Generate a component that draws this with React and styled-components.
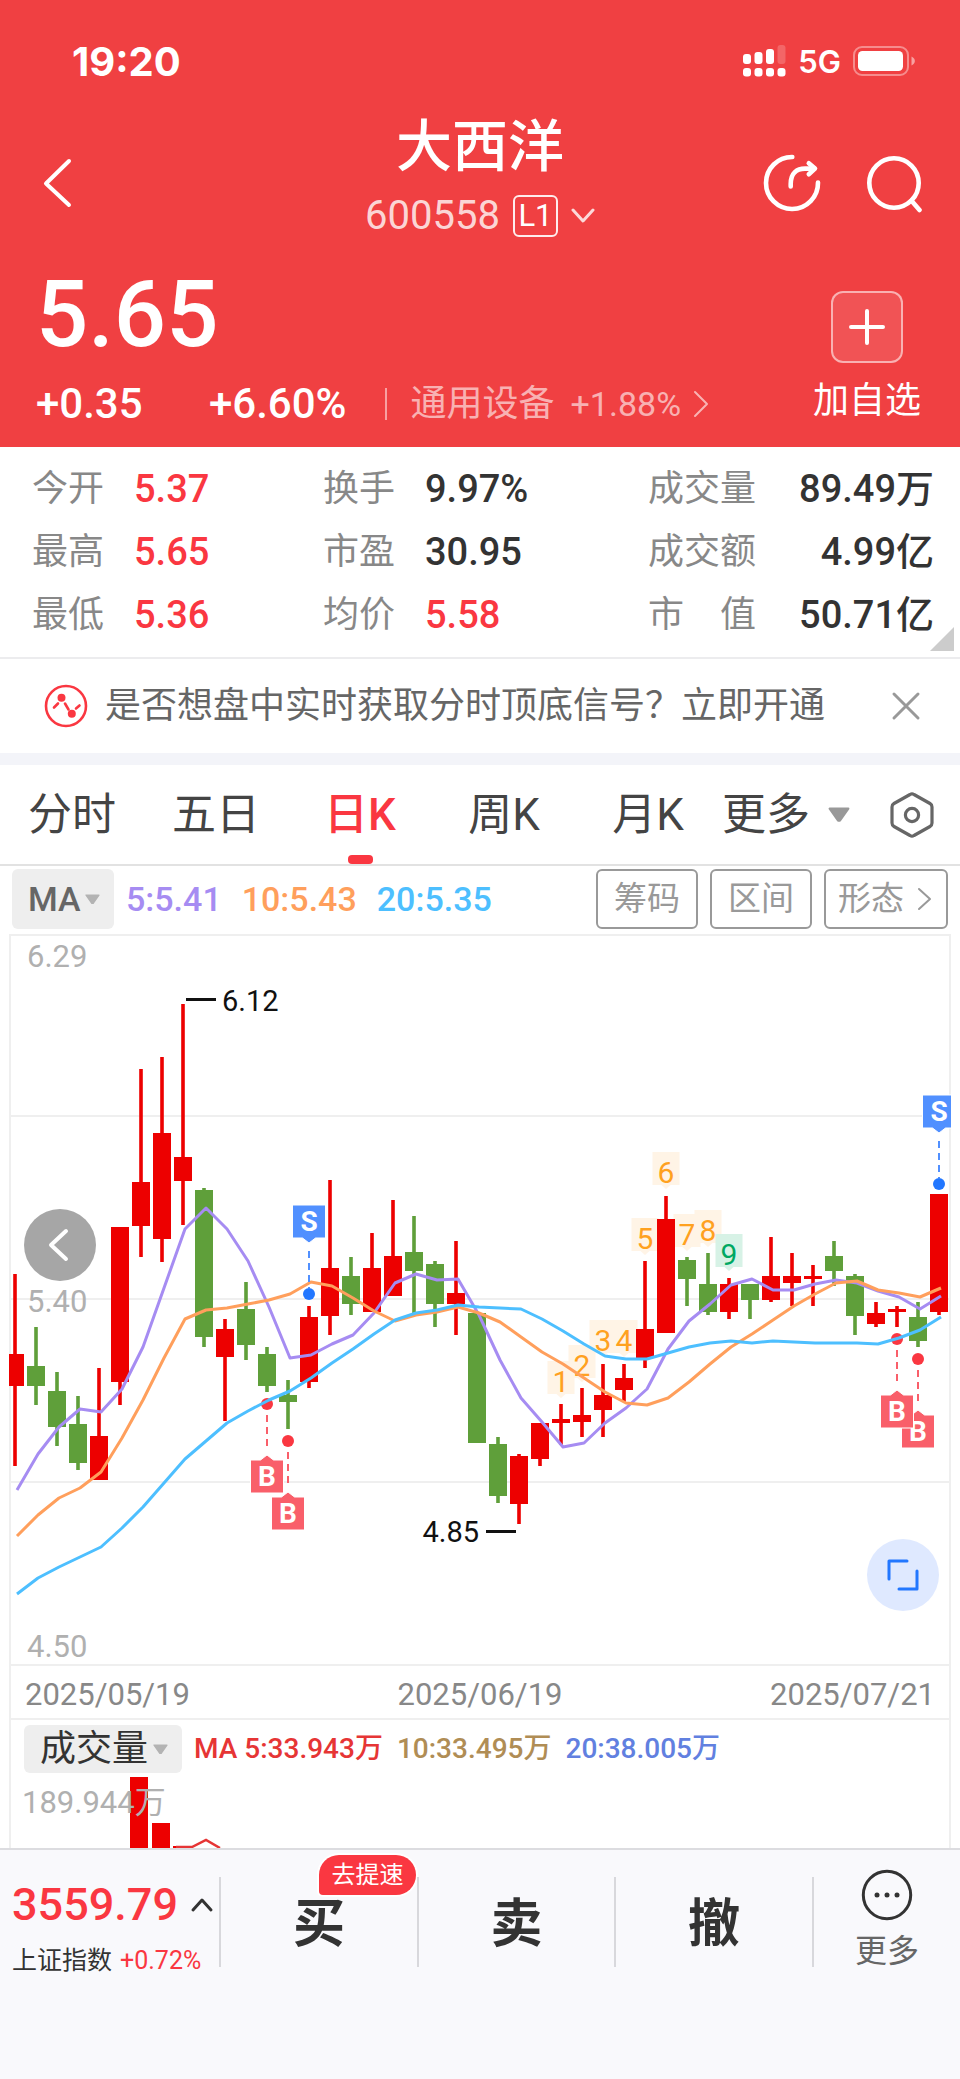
import React, {useState} from 'react';
import styled, {createGlobalStyle} from 'styled-components';

const GlobalStyle = createGlobalStyle`
  * {
    box-sizing: border-box;
  }
  body {
    margin: 0;
    background-color: #fff;
    font-family: Roboto, 'Noto Sans CJK SC', sans-serif;
    color: #333;
  }
  button,
  select {
    margin: 0;
    padding: 0;
    border: 0;
    background: none;
    color: inherit;
    font: inherit;
    cursor: pointer;
  }
  a {
    color: inherit;
    text-decoration: none;
  }
  dl,
  dt,
  dd,
  h1,
  p {
    margin: 0;
    font-weight: inherit;
  }
  svg {
    display: block;
    flex: none;
  }
`;

const RED = '#fa3741';
const UP = '#ed0000';
const DOWN = '#5f9f3a';

const Page = styled.div`
  min-height: 100vh;
  display: flex;
  flex-direction: column;
`;

const Header = styled.header`
  background-color: #f04042;
  color: #fff;
`;

const StatusBar = styled.div`
  height: 108px;
  padding: 14px 44px 0 72px;
  display: flex;
  align-items: center;
  justify-content: space-between;
  font-family: Inter, sans-serif;
`;

const Clock = styled.span`
  font-size: 40px;
  font-weight: 700;
`;

const StatusIcons = styled.div`
  display: flex;
  align-items: center;
  gap: 12px;
  font-size: 31px;
  font-weight: 600;
`;

const Nav = styled.nav`
  min-height: 150px;
  padding: 0 36px;
  display: grid;
  grid-template-columns: 1fr auto 1fr;
  align-items: center;
`;

const NavActions = styled.div`
  display: flex;
  justify-content: ${props => (props.$end ? 'flex-end' : 'flex-start')};
  gap: 42px;
`;

const NavTitle = styled.div`
  align-self: start;
  display: flex;
  flex-direction: column;
  align-items: center;
`;

const StockName = styled.h1`
  font-size: 56px;
  font-weight: 500;
  line-height: 78px;
`;

const StockCode = styled.button`
  display: flex;
  align-items: center;
  gap: 13px;
  margin-top: 8px;
  font-size: 40px;
  line-height: 44px;
  color: rgba(255, 255, 255, 0.8);
`;

const LevelTag = styled.span`
  width: 45px;
  border: 2px solid rgba(255, 255, 255, 0.9);
  border-radius: 6px;
  font-size: 31px;
  line-height: 38px;
  color: #fff;
`;

const Quote = styled.section`
  padding: 0 39px 18px 36px;
  display: flex;
  justify-content: space-between;
`;

const Price = styled.p`
  padding-top: 7px;
  font-size: 92px;
  font-weight: 500;
  line-height: 100px;
`;

const ChangeRow = styled.div`
  margin-top: 14px;
  display: flex;
  align-items: center;
  font-size: 42px;
  font-weight: 500;
  line-height: 50px;
`;

const Change = styled.span`
  min-width: 173px;
`;

const Sector = styled.a`
  margin-left: 38px;
  padding-left: 24px;
  display: flex;
  align-items: center;
  font-size: 36px;
  font-weight: 400;
  line-height: 32px;
  color: rgba(255, 255, 255, 0.6);
  border-left: 2px solid rgba(255, 255, 255, 0.5);
`;

const SectorChange = styled.span`
  margin: 0 12px 0 16px;
  font-size: 34px;
`;

const AddWatch = styled.button`
  padding-top: 33px;
  display: flex;
  flex-direction: column;
  align-items: center;
  gap: 16px;
  font-size: 36px;
  line-height: 44px;
`;

const PlusBox = styled.span`
  width: 72px;
  height: 72px;
  display: flex;
  align-items: center;
  justify-content: center;
  border: 2px solid rgba(255, 255, 255, 0.55);
  border-radius: 12px;
  background-color: rgba(255, 255, 255, 0.1);
`;

const Stats = styled.dl`
  position: relative;
  padding: 10px 26px 11px 32px;
  display: grid;
  grid-template-columns: 291fr 325fr 286fr;
  grid-auto-rows: 63px;
  border-bottom: 2px solid #ececee;
`;

const Stat = styled.div`
  display: flex;
  align-items: center;
  gap: 30px;
  justify-content: ${props => (props.$spread ? 'space-between' : 'flex-start')};
  line-height: 44px;

  dt {
    font-size: 36px;
    color: #888;
  }
  dd {
    font-size: 38px;
    font-weight: 500;
    white-space: nowrap;
    color: ${props => (props.$up ? RED : '#333')};
  }
`;

const Corner = styled.span`
  position: absolute;
  right: 6px;
  bottom: 6px;
  border-left: 24px solid transparent;
  border-bottom: 24px solid #ccc;
`;

const Notice = styled.div`
  height: 106px;
  padding: 0 38px 0 44px;
  display: flex;
  align-items: center;
  justify-content: space-between;
  border-bottom: 12px solid #f3f4f9;
  font-size: 36px;
  line-height: 44px;
  color: #666;
`;

const NoticeLink = styled.a`
  display: flex;
  align-items: center;
  gap: 17px;
`;

const Tabs = styled.div`
  height: 101px;
  display: grid;
  grid-template-columns: repeat(6, 144fr) 96fr;
  border-bottom: 2px solid #e2e2e2;
`;

const Tab = styled.button`
  position: relative;
  display: flex;
  align-items: center;
  justify-content: center;
  gap: 18px;
  font-size: 44px;
  line-height: 52px;
  color: ${props => (props.$active ? RED : '#444')};
  font-weight: ${props => (props.$active ? 500 : 400)};

  &::after {
    content: '';
    display: ${props => (props.$active ? 'block' : 'none')};
    position: absolute;
    bottom: 0;
    width: 25px;
    height: 9px;
    border-radius: 4px;
    background-color: ${RED};
  }
`;

const MoreTab = styled(Tab)`
  padding-right: 12px;
`;

const Toolbar = styled.div`
  padding: 3px 12px 5px;
  display: flex;
  align-items: center;
  gap: 12px;
`;

const Picker = styled.label`
  height: ${props => (props.$small ? 48 : 60)}px;
  padding: 0 14px 0 16px;
  display: flex;
  align-items: center;
  gap: 4px;
  border-radius: 6px;
  background-color: #eee;
  font-size: ${props => (props.$small ? 36 : 34)}px;
  font-weight: ${props => (props.$small ? 400 : 500)};
  color: ${props => (props.$small ? '#333' : '#666')};

  select {
    appearance: none;
    line-height: 44px;
    outline: none;
  }
`;

const MaList = styled.div`
  flex: 1;
  display: flex;
  gap: ${props => (props.$small ? 14 : 20)}px;
  font-size: ${props => (props.$small ? 28 : 34)}px;
  font-weight: 500;
  line-height: 44px;
  white-space: nowrap;
`;

const MaValue = styled.span`
  color: ${props => props.$color};
`;

const ToolButton = styled.button`
  height: 60px;
  padding: 0 ${props => (props.$arrow ? 12 : 16)}px;
  display: flex;
  align-items: center;
  gap: 12px;
  border: 2px solid #999;
  border-radius: 6px;
  font-size: 33px;
  line-height: 44px;
  color: #999;
`;

const ChartArea = styled.div`
  position: relative;

  > svg {
    width: 100%;
    height: auto;
    overflow: visible;
  }
`;

const RoundButton = styled.button`
  position: absolute;
  width: 72px;
  height: 72px;
  display: flex;
  align-items: center;
  justify-content: center;
  border-radius: 50%;
`;

const ScrollBack = styled(RoundButton)`
  left: 24px;
  top: 275px;
  background-color: #a6a6a6;
`;

const Expand = styled(RoundButton)`
  right: 21px;
  bottom: 55px;
  background-color: #dfe9ff;
`;

const Dates = styled.div`
  height: 54px;
  margin: 0 9px;
  padding: 4px 14px 0;
  display: flex;
  align-items: center;
  justify-content: space-between;
  border: 2px solid #efefef;
  border-top: 0;
  font-size: 31px;
  color: #888;
`;

const Volume = styled.section`
  margin: 0 9px;
  border: solid #efefef;
  border-width: 0 2px;

  > svg {
    width: 100%;
    height: auto;
  }
`;

const VolumeHead = styled.div`
  padding: 5px 13px 4px;
  display: flex;
  align-items: center;
  gap: 12px;
`;

const Footer = styled.footer`
  flex: 1;
  padding-top: 27px;
  border-top: 2px solid #dcdce0;
  background-color: #f9f9fc;
`;

const FooterBar = styled.div`
  display: grid;
  grid-template-rows: 90px;
  grid-template-columns: 219fr 198fr 197fr 198fr 148fr;

  > * + * {
    border-left: 2px solid #d8d8dc;
  }
`;

const IndexQuote = styled.a`
  padding-left: 12px;
  display: flex;
  flex-direction: column;
  white-space: nowrap;
  color: ${RED};
`;

const IndexValue = styled.span`
  display: flex;
  align-items: center;
  gap: 12px;
  font-size: 45px;
  font-weight: 500;
  line-height: 56px;
`;

const IndexName = styled.span`
  font-size: 25px;
  line-height: 56px;

  em {
    margin-right: 8px;
    font-style: normal;
    color: #333;
  }
`;

const Trade = styled.button`
  position: relative;
  padding-top: 6px;
  font-size: 52px;
  font-weight: 700;
  line-height: 84px;
`;

const Badge = styled.span`
  position: absolute;
  top: -22px;
  right: 1px;
  width: 97px;
  border-radius: 20px 20px 20px 4px;
  background-color: ${RED};
  box-shadow: 0 0 0 2px #fff;
  color: #fff;
  font-size: 24px;
  font-weight: 400;
  line-height: 40px;
`;

const More = styled.button`
  display: flex;
  flex-direction: column;
  align-items: center;
  justify-content: space-between;
  font-size: 32px;
  line-height: 32px;
  color: #666;

  svg {
    margin-top: -8px;
  }
`;

const STATS = [
  {label: '今开', value: '5.37', up: true},
  {label: '换手', value: '9.97%'},
  {label: '成交量', value: '89.49万', spread: true},
  {label: '最高', value: '5.65', up: true},
  {label: '市盈', value: '30.95'},
  {label: '成交额', value: '4.99亿', spread: true},
  {label: '最低', value: '5.36', up: true},
  {label: '均价', value: '5.58', up: true},
  {label: '市　值', value: '50.71亿', spread: true},
];

const TABS = ['分时', '五日', '日K', '周K', '月K'];

// [high, body top, body bottom, low, rising], in chart units from the top
const CANDLES = [
  [340, 420, 452, 532, 1],
  [393, 432, 452, 471, 0],
  [438, 457, 493, 512, 0],
  [462, 490, 529, 536, 0],
  [434, 502, 546, 546, 1],
  [293, 293, 448, 471, 1],
  [135, 248, 292, 323, 1],
  [123, 199, 305, 328, 1],
  [70, 223, 247, 291, 1],
  [254, 256, 403, 413, 0],
  [385, 395, 423, 487, 1],
  [348, 375, 411, 426, 0],
  [413, 420, 452, 458, 0],
  [446, 461, 468, 495, 0],
  [372, 383, 448, 454, 1],
  [246, 334, 382, 401, 1],
  [323, 342, 370, 381, 0],
  [299, 334, 378, 378, 1],
  [266, 322, 362, 362, 1],
  [282, 318, 337, 379, 0],
  [327, 330, 370, 393, 0],
  [307, 359, 370, 401, 1],
  [379, 379, 509, 509, 0],
  [503, 510, 562, 569, 0],
  [520, 522, 570, 590, 1],
  [489, 489, 525, 532, 1],
  [470, 485, 489, 511, 1],
  [454, 481, 488, 503, 1],
  [430, 461, 476, 503, 1],
  [430, 444, 456, 468, 1],
  [327, 395, 424, 434, 1],
  [262, 285, 399, 399, 1],
  [323, 326, 345, 372, 0],
  [319, 350, 378, 381, 0],
  [344, 350, 378, 385, 1],
  [350, 350, 366, 385, 0],
  [303, 342, 366, 368, 1],
  [319, 342, 349, 372, 1],
  [331, 342, 345, 372, 1],
  [307, 322, 337, 352, 0],
  [340, 342, 382, 401, 0],
  [368, 379, 390, 393, 1],
  [372, 375, 378, 393, 1],
  [368, 383, 407, 413, 0],
  [260, 260, 378, 381, 1],
];

const MA_LINES = [
  {
    color: '#a68cf2',
    points: [
      556, 520, 493, 475, 478, 455, 413, 354, 295, 274, 295, 327, 373, 424, 421,
      410, 401, 379, 349, 340, 346, 345, 381, 426, 464, 488, 513, 509, 489, 474,
      455, 415, 387, 370, 351, 345, 356, 356, 350, 346, 349, 357, 363, 375, 362,
    ],
  },
  {
    color: '#ff9f5c',
    points: [
      602, 581, 564, 554, 538, 504, 466, 424, 385, 376, 374, 370, 366, 360, 348,
      352, 364, 377, 387, 381, 378, 373, 379, 388, 403, 418, 430, 444, 458, 469,
      471, 464, 448, 430, 413, 400, 386, 372, 360, 349, 347, 356, 359, 363, 354,
    ],
  },
  {
    color: '#4dbfff',
    points: [
      660, 644, 633, 623, 613, 594, 573, 549, 525, 507, 489, 477, 466, 457, 444,
      429, 415, 400, 386, 379, 376, 371, 373, 374, 375, 385, 397, 410, 422, 425,
      425, 419, 413, 409, 407, 409, 407, 408, 409, 409, 409, 410, 404, 396, 383,
    ],
  },
];

// candle index and top of the numbered tag
const COUNTS = [
  [26, 427],
  [27, 411],
  [28, 386],
  [29, 386],
  [30, 284],
  [31, 218],
  [32, 280],
  [33, 276],
  [34, 300],
];

// candle index and height of the dot
const SIGNALS = [
  {type: 'S', index: 14, y: 360},
  {type: 'S', index: 44, y: 250},
  {type: 'B', index: 12, y: 470},
  {type: 'B', index: 13, y: 507},
  {type: 'B', index: 43, y: 425},
  {type: 'B', index: 42, y: 405},
];

const xOf = index => 15 + index * 21;

const Chevron = ({d, width, height, stroke = 2, color = 'currentColor'}) => (
  <svg width={width} height={height} viewBox={`0 0 ${width} ${height}`}>
    <path
      d={d}
      fill="none"
      stroke={color}
      strokeWidth={stroke}
      strokeLinecap="round"
      strokeLinejoin="round"
    />
  </svg>
);

const Triangle = ({size, color}) => (
  <svg width={size} height={size * 0.7} viewBox="0 0 20 14">
    <path
      d="M1.500 1.500H18.500L10.800 12.500H9.200Z"
      fill={color}
      stroke={color}
      strokeWidth="2"
      strokeLinejoin="round"
    />
  </svg>
);

const SignalIcon = () => (
  <svg width="43" height="32" viewBox="0 0 43 32" fill="#fff">
    <rect x="0" y="9" width="8" height="10" rx="3" />
    <rect x="11.500" y="7" width="8" height="12" rx="3" />
    <rect x="23" y="4" width="8" height="15" rx="3" />
    <rect x="34.500" y="0" width="8" height="19" rx="3" opacity="0.2" />
    <rect x="0" y="23" width="8" height="8.500" rx="3" />
    <rect x="11.500" y="23" width="8" height="8.500" rx="3" />
    <rect x="23" y="23" width="8" height="8.500" rx="3" />
    <rect x="34.500" y="23" width="8" height="8.500" rx="3" />
  </svg>
);

const BatteryIcon = () => (
  <svg width="63" height="30" viewBox="0 0 63 30">
    <rect
      x="1"
      y="1"
      width="54"
      height="28"
      rx="8"
      fill="none"
      stroke="#fff"
      strokeWidth="2"
      opacity="0.4"
    />
    <rect x="5" y="5" width="45" height="20" rx="4.500" fill="#fff" />
    <path d="M58.500 10.500C63 12.500 63 17.500 58.500 19.500Z" fill="#fff" opacity="0.5" />
  </svg>
);

const ShareIcon = () => (
  <svg width="60" height="60" viewBox="0 0 60 60" fill="none">
    <g
      stroke="#fff"
      strokeWidth="4.600"
      strokeLinecap="round"
      strokeLinejoin="round">
      <path d="M30.300 4A26 26 0 1 0 56 29.500" />
      <path d="M28.700 33.500V31C28.700 20 35 15.600 43 15.600H52" />
      <path d="M46.800 10.200L53 15.600L46.800 21.300" />
    </g>
  </svg>
);

const SearchIcon = () => (
  <svg width="60" height="60" viewBox="0 0 60 60" fill="none">
    <g stroke="#fff" strokeWidth="4.600" strokeLinecap="round">
      <circle cx="30" cy="30" r="24.700" />
      <path d="M47.500 47.700L55.500 57" />
    </g>
  </svg>
);

const TrendIcon = () => (
  <svg width="44" height="44" viewBox="0 0 44 44" fill="none">
    <g stroke={RED} strokeWidth="2.600" strokeLinecap="round">
      <circle cx="22" cy="22" r="20" />
      <path d="M10 23.500L14 19.500M21 19.500L24.500 25.500M32 24.500L35.500 21.500" />
    </g>
    <circle cx="17.500" cy="13.700" r="4" fill={RED} />
    <circle cx="27.800" cy="29.800" r="4" fill={RED} />
  </svg>
);

const SettingsIcon = () => (
  <svg width="48" height="48" viewBox="0 0 48 48" fill="none">
    <g stroke="#666" strokeWidth="3.200" strokeLinejoin="round">
      <path d="M22 3.500Q24 2.300 26 3.500L42 12.500Q44 13.600 44 16V32Q44 34.400 42 35.500L26 44.500Q24 45.700 22 44.500L6 35.500Q4 34.400 4 32V16Q4 13.600 6 12.500Z" />
      <circle cx="24" cy="24" r="6.600" />
    </g>
  </svg>
);

const MoreIcon = () => (
  <svg width="52" height="52" viewBox="0 0 52 52">
    <circle cx="26" cy="26" r="23.700" fill="none" stroke="#333" strokeWidth="3" />
    <g fill="#333">
      <circle cx="16" cy="26" r="2.500" />
      <circle cx="26" cy="26" r="2.500" />
      <circle cx="36" cy="26" r="2.500" />
    </g>
  </svg>
);

const Candle = ({index, data: [high, top, bottom, low, rising]}) => {
  const x = xOf(index);
  const color = rising ? UP : DOWN;
  return (
    <g fill={color}>
      <rect x={x - 1.8} y={high} width="3.600" height={low - high} />
      <rect x={x - 9} y={top} width="18" height={bottom - top} />
    </g>
  );
};

const CountTag = ({index, top, number}) => {
  const x = xOf(index);
  const last = number === 9;
  return (
    <g>
      <path
        d={`M${x - 13.5} ${top}h27v33h-9l-4.500 4l-4.500 -4h-9z`}
        fill={last ? '#d7f2e6' : '#fff4e6'}
      />
      <text
        x={x}
        y={top + 31}
        fontSize="30"
        textAnchor="middle"
        fill={last ? '#00a862' : '#ffa11f'}>
        {number}
      </text>
    </g>
  );
};

const SignalDot = ({index, y, type}) => (
  <circle cx={xOf(index)} cy={y} r="6" fill={type === 'S' ? '#2277ff' : RED} />
);

const SignalFlag = ({index, y, type}) => {
  const x = xOf(index);
  const sell = type === 'S';
  const color = sell ? '#5190ff' : '#f95f6a';
  const top = sell ? y - 89 : y + 56;
  return (
    <g>
      <path
        d={sell ? `M${x} ${y - 43}V${y - 6}` : `M${x} ${y + 11}V${y + 47}`}
        stroke={color}
        strokeWidth="2"
        strokeDasharray="7 5"
      />
      <path
        d={
          sell
            ? `M${x - 16.5} ${top}h33v33h-10l-6.500 5l-6.500 -5h-10z`
            : `M${x - 16.5} ${top}h10l6.500 -5l6.500 5h10v33h-33z`
        }
        fill={color}
        stroke="#fff"
        strokeWidth="1"
      />
      <text
        x={x}
        y={top + 26}
        fontSize="28"
        fontWeight="700"
        textAnchor="middle"
        fill="#fff">
        {type}
      </text>
    </g>
  );
};

const KlineChart = () => (
  <svg viewBox="0 0 960 732" role="img" aria-label="日K">
    <clipPath id="plot">
      <rect x="9" y="0" width="942" height="732" />
    </clipPath>
    <g stroke="#efefef" strokeWidth="2">
      <path d="M10 0V732M950 0V732" />
      <path d="M9 1H951M9 182H951M9 365H951M9 548H951M9 731H951" />
    </g>
    <g fill="#b0b0b0" fontSize="31">
      <text x="27" y="33">6.29</text>
      <text x="27" y="378">5.40</text>
      <text x="27" y="723">4.50</text>
    </g>
    <g clipPath="url(#plot)">
      {COUNTS.map(([index, top], i) => (
        <CountTag key={index} index={index} top={top} number={i + 1} />
      ))}
      {CANDLES.map((data, index) => (
        <Candle key={index} index={index} data={data} />
      ))}
      {SIGNALS.map(signal => (
        <SignalDot key={signal.index} {...signal} />
      ))}
      {MA_LINES.map(({color, points}) => (
        <polyline
          key={color}
          points={points.map((y, i) => `${xOf(i) + 2},${y}`).join(' ')}
          fill="none"
          stroke={color}
          strokeWidth="3"
          strokeLinejoin="round"
        />
      ))}
      {SIGNALS.map(signal => (
        <SignalFlag key={signal.index} {...signal} />
      ))}
    </g>
    <path d="M186 65.500H216M486 597.500H516" stroke="#111" strokeWidth="3" />
    <g fill="#111" fontSize="29">
      <text x="222" y="77">6.12</text>
      <text x="479" y="608" textAnchor="end">4.85</text>
    </g>
  </svg>
);

const VolumeChart = () => (
  <svg viewBox="11 0 938 71" role="img" aria-label="成交量">
    <g fill={UP}>
      <rect x="130" y="0" width="18" height="71" />
      <rect x="152" y="46" width="18" height="25" />
      <rect x="173" y="69" width="18" height="2" />
    </g>
    <path
      d="M176 70H192L206 63L220 71"
      fill="none"
      stroke="#e63535"
      strokeWidth="2.500"
    />
    <text x="22" y="36" fontSize="31" fill="#b0b0b0">
      189.944万
    </text>
  </svg>
);

const App = () => {
  const [tab, setTab] = useState('日K');

  return (
    <Page>
      <GlobalStyle />
      <Header>
        <StatusBar>
          <Clock>19:20</Clock>
          <StatusIcons>
            <SignalIcon />
            <span>5G</span>
            <BatteryIcon />
          </StatusIcons>
        </StatusBar>
        <Nav>
          <NavActions>
            <button type="button" aria-label="返回">
              <Chevron width={44} height={52} stroke={4} d="M33 4L10 26.500L33 48" />
            </button>
          </NavActions>
          <NavTitle>
            <StockName>大西洋</StockName>
            <StockCode type="button">
              600558
              <LevelTag>L1</LevelTag>
              <Chevron width={24} height={16} stroke={3} d="M2 2L12 13L22 2" />
            </StockCode>
          </NavTitle>
          <NavActions $end>
            <button type="button" aria-label="分享">
              <ShareIcon />
            </button>
            <button type="button" aria-label="搜索">
              <SearchIcon />
            </button>
          </NavActions>
        </Nav>
        <Quote>
          <div>
            <Price>5.65</Price>
            <ChangeRow>
              <Change>+0.35</Change>
              <span>+6.60%</span>
              <Sector href="#sector">
                通用设备
                <SectorChange>+1.88%</SectorChange>
                <Chevron width={16} height={28} d="M2 2L14 14L2 26" />
              </Sector>
            </ChangeRow>
          </div>
          <AddWatch type="button">
            <PlusBox>
              <Chevron width={40} height={40} stroke={4} d="M20 4V36M4 20H36" />
            </PlusBox>
            加自选
          </AddWatch>
        </Quote>
      </Header>

      <Stats>
        {STATS.map(({label, value, up, spread}) => (
          <Stat key={label} $up={up} $spread={spread}>
            <dt>{label}</dt>
            <dd>{value}</dd>
          </Stat>
        ))}
        <Corner />
      </Stats>

      <Notice>
        <NoticeLink href="#signal">
          <TrendIcon />
          是否想盘中实时获取分时顶底信号？立即开通
        </NoticeLink>
        <button type="button" aria-label="关闭">
          <Chevron
            width={32}
            height={32}
            stroke={3}
            color="#999"
            d="M4 4L28 28M28 4L4 28"
          />
        </button>
      </Notice>

      <Tabs>
        {TABS.map(name => (
          <Tab
            key={name}
            type="button"
            $active={name === tab}
            onClick={() => setTab(name)}>
            {name}
          </Tab>
        ))}
        <MoreTab type="button">
          更多
          <Triangle size={22} color="#999" />
        </MoreTab>
        <Tab type="button" aria-label="设置">
          <SettingsIcon />
        </Tab>
      </Tabs>

      <Toolbar>
        <Picker>
          <select aria-label="指标">
            <option>MA</option>
          </select>
          <Triangle size={15} color="#b3b3b3" />
        </Picker>
        <MaList>
          <MaValue $color="#a68cf2">5:5.41</MaValue>
          <MaValue $color="#ff9f5c">10:5.43</MaValue>
          <MaValue $color="#4dbfff">20:5.35</MaValue>
        </MaList>
        <ToolButton type="button">筹码</ToolButton>
        <ToolButton type="button">区间</ToolButton>
        <ToolButton type="button" $arrow>
          形态
          <Chevron width={18} height={26} d="M3 3L14 13L3 23" />
        </ToolButton>
      </Toolbar>

      <ChartArea>
        <KlineChart />
        <ScrollBack type="button" aria-label="更早">
          <Chevron
            width={30}
            height={36}
            stroke={4}
            color="#fff"
            d="M21 4L6 18L21 32"
          />
        </ScrollBack>
        <Expand type="button" aria-label="全屏">
          <Chevron
            width={36}
            height={36}
            stroke={3}
            color="#2277ff"
            d="M4 22V4H22M32 14V32H14"
          />
        </Expand>
      </ChartArea>
      <Dates>
        <span>2025/05/19</span>
        <span>2025/06/19</span>
        <span>2025/07/21</span>
      </Dates>

      <Volume>
        <VolumeHead>
          <Picker $small>
            <select aria-label="副图指标">
              <option>成交量</option>
            </select>
            <Triangle size={15} color="#b3b3b3" />
          </Picker>
          <MaList $small>
            <MaValue $color="#e63535">MA 5:33.943万</MaValue>
            <MaValue $color="#b08d55">10:33.495万</MaValue>
            <MaValue $color="#6180e0">20:38.005万</MaValue>
          </MaList>
        </VolumeHead>
        <VolumeChart />
      </Volume>

      <Footer>
        <FooterBar>
          <IndexQuote href="#index">
            <IndexValue>
              3559.79
              <Chevron
                width={24}
                height={16}
                stroke={3}
                color="#333"
                d="M3 13L12 3L21 13"
              />
            </IndexValue>
            <IndexName>
              <em>上证指数</em>
              +0.72%
            </IndexName>
          </IndexQuote>
          <Trade type="button">
            买<Badge>去提速</Badge>
          </Trade>
          <Trade type="button">卖</Trade>
          <Trade type="button">撤</Trade>
          <More type="button">
            <MoreIcon />
            更多
          </More>
        </FooterBar>
      </Footer>
    </Page>
  );
};

export default App;
